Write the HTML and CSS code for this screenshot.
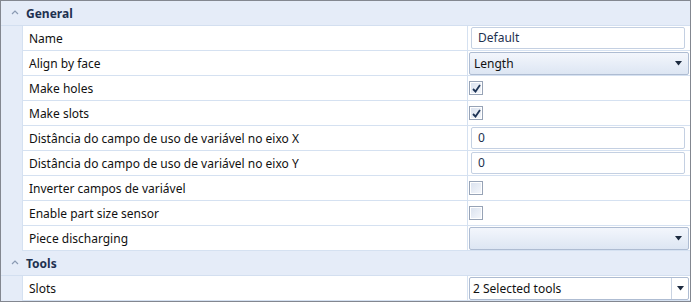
FILE: index.html
```html
<!DOCTYPE html>
<html lang="pt">
<head>
    <meta charset="UTF-8">
    <title>Properties</title>
    <link rel="stylesheet" href="styles.css">
</head>
<body>
    <div class="grid">
        <div class="category">
            <span class="chevron">
                <svg width="8" height="5" viewBox="0 0 8 5"><polyline points="1,4 4,1 7,4" fill="none" stroke="#8a9ab3" stroke-width="1.2"/></svg>
            </span>
            <span class="cat-title">General</span>
        </div>
        <div class="row">
            <div class="gutter"></div>
            <div class="label">Name</div>
            <div class="value"><div class="textbox">Default</div></div>
        </div>
        <div class="row">
            <div class="gutter"></div>
            <div class="label">Align by face</div>
            <div class="value">
                <div class="combo">
                    <span>Length</span>
                    <svg class="arrow" width="7" height="5" viewBox="0 0 7 5"><polygon points="0,0 7,0 3.5,4.5" fill="#1c2a3f"/></svg>
                </div>
            </div>
        </div>
        <div class="row">
            <div class="gutter"></div>
            <div class="label">Make holes</div>
            <div class="value">
                <span class="check">
                    <svg width="9" height="9" viewBox="0 0 9 9"><path d="M1 5 L3.5 7.5 L8 1" fill="none" stroke="#1f3556" stroke-width="1.8"/></svg>
                </span>
            </div>
        </div>
        <div class="row">
            <div class="gutter"></div>
            <div class="label">Make slots</div>
            <div class="value">
                <span class="check">
                    <svg width="9" height="9" viewBox="0 0 9 9"><path d="M1 5 L3.5 7.5 L8 1" fill="none" stroke="#1f3556" stroke-width="1.8"/></svg>
                </span>
            </div>
        </div>
        <div class="row">
            <div class="gutter"></div>
            <div class="label">Distância do campo de uso de variável no eixo X</div>
            <div class="value"><div class="textbox">0</div></div>
        </div>
        <div class="row">
            <div class="gutter"></div>
            <div class="label">Distância do campo de uso de variável no eixo Y</div>
            <div class="value"><div class="textbox">0</div></div>
        </div>
        <div class="row">
            <div class="gutter"></div>
            <div class="label">Inverter campos de variável</div>
            <div class="value"><span class="check"></span></div>
        </div>
        <div class="row">
            <div class="gutter"></div>
            <div class="label">Enable part size sensor</div>
            <div class="value"><span class="check"></span></div>
        </div>
        <div class="row">
            <div class="gutter"></div>
            <div class="label">Piece discharging</div>
            <div class="value">
                <div class="combo">
                    <span></span>
                    <svg class="arrow" width="7" height="5" viewBox="0 0 7 5"><polygon points="0,0 7,0 3.5,4.5" fill="#1c2a3f"/></svg>
                </div>
            </div>
        </div>
        <div class="category">
            <span class="chevron">
                <svg width="8" height="5" viewBox="0 0 8 5"><polyline points="1,4 4,1 7,4" fill="none" stroke="#8a9ab3" stroke-width="1.2"/></svg>
            </span>
            <span class="cat-title">Tools</span>
        </div>
        <div class="row">
            <div class="gutter"></div>
            <div class="label">Slots</div>
            <div class="value">
                <div class="combo combo-edit">
                    <span class="combo-text">2 Selected tools</span>
                    <span class="combo-btn">
                        <svg width="7" height="5" viewBox="0 0 7 5"><polygon points="0,0 7,0 3.5,4.5" fill="#1c2a3f"/></svg>
                    </span>
                </div>
            </div>
        </div>
    </div>
</body>
</html>
```

FILE: styles.css
```css
* {
    margin: 0;
    padding: 0;
    box-sizing: border-box;
}

body {
    background: #fff;
    font-family: 'Noto Sans', 'Open Sans', sans-serif;
    font-size: 12px;
    color: #111;
}

.grid {
    width: 691px;
    height: 302px;
    border: 1px solid #838790;
    background: #fff;
    display: flex;
    flex-direction: column;
}

.category {
    height: 25px;
    background: #e5ecf8;
    border-bottom: 1px solid #d3dff0;
    display: flex;
    align-items: center;
    padding-top: 1px;
}

.chevron {
    width: 25px;
    display: flex;
    justify-content: center;
    padding-left: 3px;
    margin-bottom: 2px;
}

.cat-title {
    font-weight: bold;
    color: #1e3150;
}

.row {
    height: 25px;
    display: flex;
    border-bottom: 1px solid #d5e1f1;
}

.gutter {
    width: 22px;
    background: #e5ecf8;
    border-right: 1px solid #d5e1f1;
    margin-bottom: -1px;
}

.label {
    width: 445px;
    padding-left: 6px;
    padding-top: 1px;
    line-height: 24px;
    border-right: 1px solid #d5e1f1;
    white-space: nowrap;
    overflow: hidden;
}

.value {
    flex: 1;
    display: flex;
    align-items: center;
    padding-left: 1px;
}

.textbox {
    width: 214px;
    height: 22px;
    margin-left: 2px;
    border: 1px solid #c4d0e2;
    border-radius: 2px;
    padding-left: 6px;
    line-height: 20px;
    color: #1e3150;
}

.combo {
    width: 220px;
    height: 23px;
    border: 1px solid #aebcd2;
    border-radius: 2px;
    background: linear-gradient(#f3f6fc, #dde6f3);
    display: flex;
    align-items: center;
    justify-content: space-between;
    padding-left: 4px;
    padding-right: 6px;
}

.combo-edit {
    background: #fff;
    padding-right: 0;
    padding-left: 3px;
}

.combo-btn {
    width: 17px;
    height: 21px;
    border-left: 1px solid #c9d3e2;
    display: flex;
    align-items: center;
    justify-content: center;
}

.check {
    width: 14px;
    height: 14px;
    border: 1px solid #97a3b6;
    box-shadow: inset 0 0 0 1px #fff;
    background: linear-gradient(135deg, #d9e1ee, #f6f8fc);
    display: flex;
    align-items: center;
    justify-content: center;
}
```
